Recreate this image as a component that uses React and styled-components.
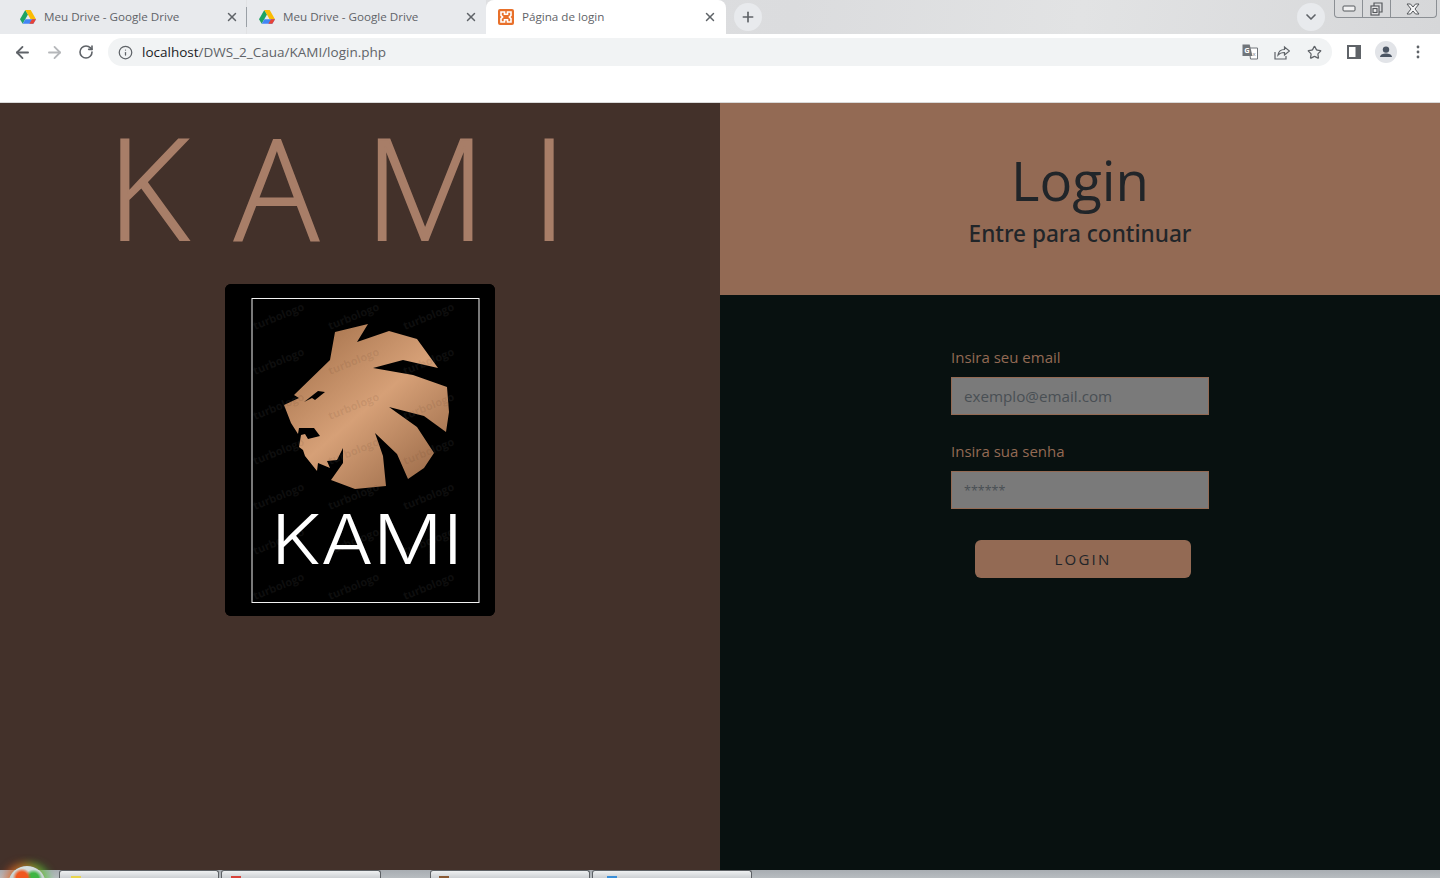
import styled, { createGlobalStyle } from "styled-components";
import { ArrowLeft, ArrowRight, RotateCw, Info, Star, Plus, X, ChevronDown } from "lucide-react";

const GlobalStyle = createGlobalStyle`
  html, body {
    margin: 0;
    padding: 0;
    height: 100%;
    overflow: hidden;
  }
  body {
    font-family: "Open Sans", "Noto Sans", sans-serif;
  }
`;

const Page = styled.div`
  width: 1440px;
  height: 878px;
  display: flex;
  flex-direction: column;
  overflow: hidden;
  position: relative;
`;

// Browser top
const TabStrip = styled.div`
  height: 34px;
  display: flex;
  align-items: stretch;
  background: linear-gradient(100deg, #e4e5e7 0%, #dbdcde 55%, #e2e3e4 75%, #d6d7d9 100%);
  position: relative;
`;

const Tab = styled.div`
  width: ${(p) => p.$width}px;
  display: flex;
  align-items: center;
  box-sizing: border-box;
  padding: 0 ${(p) => p.$right}px 1px ${(p) => p.$left}px;
  gap: 8px;
  background: ${(p) => (p.$active ? "#ffffff" : "#e8eaed")};
  border-radius: ${(p) => (p.$active ? "8px 8px 0 0" : "0")};
  font-size: 11.65px;
  color: #5f6368;
`;

const TabTitle = styled.span`
  flex: 1;
  white-space: nowrap;
`;

const Divider = styled.div`
  width: 1px;
  height: 20px;
  background: #9aa0a6;
  align-self: center;
`;

const NewTab = styled.div`
  width: 28px;
  height: 28px;
  border-radius: 50%;
  background: #e8eaed;
  color: #5f6368;
  display: flex;
  align-items: center;
  justify-content: center;
  align-self: center;
  margin-left: 8px;
`;

const TabSearch = styled(NewTab)`
  margin-left: auto;
  margin-right: 9px;
`;

const WindowButtons = styled.div`
  display: flex;
  width: 103px;
  height: 18px;
  box-sizing: border-box;
  margin-right: 3px;
  border: 1px solid #8b8f94;
  border-top: none;
  border-radius: 0 0 4px 4px;
`;

const WindowButton = styled.div`
  width: ${(p) => p.$width}px;
  display: flex;
  align-items: center;
  justify-content: center;
  border-right: ${(p) => (p.$last ? "none" : "1px solid #8b8f94")};
`;

const Toolbar = styled.div`
  height: 36px;
  background: #ffffff;
  display: flex;
  align-items: center;
  padding-left: 6px;
  box-sizing: border-box;
  color: #5f6368;
`;

const NavButton = styled.div`
  width: 32px;
  height: 28px;
  display: flex;
  align-items: center;
  justify-content: center;
  margin-left: ${(p) => p.$gap || 0}px;
  color: ${(p) => (p.$off ? "#b5b7ba" : "#5f6368")};
`;

const Omnibox = styled.div`
  width: 1224px;
  height: 28px;
  margin-left: 6px;
  border-radius: 14px;
  background: #f1f3f4;
  display: flex;
  align-items: center;
  padding: 0 2px 0 10px;
  box-sizing: border-box;
  font-size: 13.5px;
  color: #5f6368;
`;

const Url = styled.span`
  margin-left: 9px;
  flex: 1;
  b {
    font-weight: 400;
    color: #202124;
  }
`;

const OmniIcon = styled.div`
  width: 32px;
  height: 28px;
  display: flex;
  align-items: center;
  justify-content: center;
  color: #5f6368;
`;

const InfoBar = styled.div`
  height: 32px;
  background: #ffffff;
  border-bottom: 1px solid #d9d9d9;
`;

// Login page
const Split = styled.div`
  flex: 1;
  display: grid;
  grid-template-columns: 720px 720px;
  min-height: 0;
`;

const Left = styled.div`
  background: #43312a;
  display: flex;
  flex-direction: column;
  align-items: center;
`;

const BigTitle = styled.h1`
  margin: 0;
  height: 181px;
  font-family: "Open Sans", sans-serif;
  font-weight: 300;
  font-size: 140px;
  line-height: 166px;
  letter-spacing: 46px;
  color: #a87e68;
  -webkit-text-stroke: 2px #a87e68;
  white-space: nowrap;
`;

const LogoCard = styled.div`
  width: 270px;
  height: 332px;
  border-radius: 6px;
  overflow: hidden;
  background: #000;
  svg {
    display: block;
  }
`;

const Right = styled.div`
  background: #081110;
  display: flex;
  flex-direction: column;
  align-items: center;
`;

const Banner = styled.div`
  align-self: stretch;
  height: 192px;
  background: #936a54;
  color: #212529;
  display: flex;
  flex-direction: column;
  align-items: center;
  padding-top: 43px;
  box-sizing: border-box;
`;

const Heading = styled.div`
  font-size: 54.5px;
  line-height: 68px;
`;

const SubHeading = styled.div`
  font-family: "Noto Sans", sans-serif;
  font-size: 22.6px;
  line-height: 34px;
  font-weight: 500;
  margin-top: 3px;
`;

const Form = styled.form`
  width: 258px;
  margin-top: 50px;
  display: flex;
  flex-direction: column;
`;

const Label = styled.label`
  font-size: 15px;
  line-height: 24px;
  color: #936a54;
  margin-bottom: 8px;
`;

const Input = styled.input`
  width: 258px;
  height: 38px;
  box-sizing: border-box;
  border: 1px solid #936a54;
  background: #7a7a7a;
  padding: 0 12px;
  margin-bottom: 24px;
  font-family: inherit;
  font-size: ${(p) => p.$size}px;
  color: #43484d;
  outline: none;
  &::placeholder {
    color: #494f54;
    opacity: 1;
  }
`;

const LoginButton = styled.button`
  width: 216px;
  height: 38px;
  margin: 7px 0 0 24px;
  border: none;
  border-radius: 6px;
  background: #936a54;
  color: #212529;
  font-family: inherit;
  font-size: 15px;
  letter-spacing: 2.2px;
  padding: 0;
`;

// Windows taskbar peeking in at the bottom
const Taskbar = styled.div`
  position: absolute;
  left: 0;
  right: 0;
  bottom: 0;
  height: 8px;
  background: linear-gradient(#a8adb2, #b7bcc0);
  display: flex;
  padding-left: 59px;
  gap: 2px;
`;

const TaskItem = styled.div`
  width: 160px;
  height: 8px;
  box-sizing: border-box;
  margin-left: ${(p) => p.$gap || 0}px;
  padding: 5px 0 0 ${(p) => p.$iconX}px;
  border: 1px solid #5d6165;
  border-bottom: none;
  border-radius: 3px 3px 0 0;
  background: linear-gradient(#eef0f1, #ccd0d3);
  &::after {
    content: "";
    display: block;
    width: 10px;
    height: 2px;
    background: ${(p) => p.$icon};
  }
`;

const StartOrb = styled.div`
  position: absolute;
  left: 9px;
  bottom: -20px;
  width: 36px;
  height: 32px;
  border-radius: 50%;
  background:
    radial-gradient(circle at 36% 36%, #f0571d 0 18%, transparent 30%),
    radial-gradient(circle at 68% 38%, #3fb544 0 16%, transparent 28%),
    linear-gradient(#d8e2e0, #a6b4b2);
  box-shadow: -4px -2px 8px rgba(240, 90, 30, 0.7), 4px -2px 8px rgba(70, 210, 60, 0.75);
  z-index: 2;
`;

const DriveIcon = () => (
  <svg width="16" height="14" viewBox="0 0 16 14">
    <path d="M5.3 0L0 9.2l2.7 4.6L8 4.6z" fill="#1fa463" />
    <path d="M5.3 0h5.4L16 9.2h-5.4z" fill="#fbbc04" />
    <path d="M5.4 9.2H16l-2.7 4.6H2.7z" fill="#4285f4" />
    <path d="M12 9.2h4l-2.7 4.6H9.4z" fill="#ea4335" />
  </svg>
);

const XamppIcon = () => (
  <svg width="16" height="16" viewBox="0 0 16 16">
    <rect width="16" height="16" rx="2" fill="#e8702a" />
    <path d="M3 3h3.5v2.2h3V3H13v3.4l-1.6 1.6L13 9.6V13H9.5v-2.2h-3V13H3V9.6L4.6 8 3 6.4z" fill="none" stroke="#fff" strokeWidth="1.6" />
  </svg>
);

const TranslateIcon = () => (
  <svg width="16" height="16" viewBox="0 0 16 16">
    <path d="M7 4h8.5v11H8.5z" fill="#fff" stroke="#70757a" />
    <path d="M0.5 0.5h7.2l2.8 11.5H0.5z" fill="#70757a" />
    <text x="2.2" y="9" fontSize="7.5" fontWeight="700" fontFamily="Open Sans" fill="#fff">G</text>
    <text x="10.6" y="11.5" fontSize="6" fontFamily="Open Sans" fill="#70757a">x</text>
  </svg>
);

const ShareIcon = () => (
  <svg width="16" height="15" viewBox="0 0 16 15" fill="none" stroke="#5f6368" strokeWidth="1.2">
    <path d="M1 7v7h11v-3" />
    <path d="M4 10c.5-3.500 3-5.500 6.500-5.500V2l5 4-5 4V7.500C7.500 7.500 5.500 8.300 4 10z" />
  </svg>
);

const PanelIcon = () => (
  <svg width="14" height="14" viewBox="0 0 14 14">
    <path d="M0 0h14v14H0z" fill="#5f6368" />
    <path d="M2 2h6.500v10H2z" fill="#fff" />
  </svg>
);

const Avatar = () => (
  <svg width="22" height="22" viewBox="0 0 22 22">
    <circle cx="11" cy="11" r="11" fill="#e2e4e8" />
    <circle cx="11" cy="8.600" r="3.200" fill="#4b5563" />
    <path d="M5 16c0-2.600 3.400-3.600 6-3.600s6 1 6 3.600z" fill="#4b5563" />
  </svg>
);

const Dots = () => (
  <svg width="4" height="14" viewBox="0 0 4 14">
    <circle cx="2" cy="2" r="1.400" fill="#5f6368" />
    <circle cx="2" cy="7" r="1.400" fill="#5f6368" />
    <circle cx="2" cy="12" r="1.400" fill="#5f6368" />
  </svg>
);

const MinimizeIcon = () => (
  <svg width="14" height="7" viewBox="0 0 14 7">
    <rect x="1" y="1" width="12" height="5" rx="1" fill="#f1f1f2" stroke="#55585c" />
  </svg>
);

const RestoreIcon = () => (
  <svg width="13" height="14" viewBox="0 0 13 14" fill="none" stroke="#55585c" strokeWidth="1.200">
    <rect x="1" y="4" width="8" height="9" fill="#eeeeef" />
    <path d="M4 4V1h8v9H9" />
    <rect x="3" y="6.500" width="4" height="4" />
  </svg>
);

const CloseIcon = () => (
  <svg width="14" height="12" viewBox="0 0 14 12">
    <path d="M1 1h3.500L7 4l2.500-3H13L9 6l4 5H9.500L7 8l-2.500 3H1l4-5z" fill="#f4f4f5" stroke="#55585c" />
  </svg>
);

const LION = "110,48 143,40 132,58 164,47 192,55 213,84 178,76 148,84 188,91 222,103 224,128 221,148 199,132 164,123 192,143 209,169 199,184 183,195 172,170 150,149 158,172 161,202 130,205 106,196 118,179 118,164 112,176 102,177 105,184 93,179 92,187 80,172 78,166 74,163 76,151 80,150 83,155 95,152 89,144 74,144 73,150 66,139 59,121 74,114 69,111 105,76";

const marks = [];
for (let r = 0; r < 7; r++) {
  for (let c = 0; c < 3; c++) {
    marks.push([30 + c * 75, 46 + r * 45]);
  }
}

const Logo = () => (
  <svg width="270" height="332" viewBox="0 0 270 332">
    <defs>
      <linearGradient id="copper" gradientUnits="userSpaceOnUse" x1="63" y1="60" x2="193" y2="212">
        <stop offset="0" stopColor="#a5724c" />
        <stop offset="0.5" stopColor="#d6a077" />
        <stop offset="1" stopColor="#9a6a48" />
      </linearGradient>
      <clipPath id="lionClip">
        <polygon points={LION} />
      </clipPath>
    </defs>
    <rect width="270" height="332" fill="#000" />
    {marks.map(([x, y], i) => (
      <text key={i} x={x} y={y} fontSize="11" fontWeight="700" fontFamily="Open Sans" fill="#0e0e0e" transform={`rotate(-22 ${x} ${y})`}>
        turbologo
      </text>
    ))}
    <rect x="27" y="14.500" width="227" height="304" fill="none" stroke="#f2f2f2" strokeWidth="1" />
    <polygon fill="url(#copper)" points={LION} />
    <polygon fill="#000" points="79,118 93,107 100,108 90,116 87,114" />
    <g clipPath="url(#lionClip)">
      {marks.map(([x, y], i) => (
        <text key={i} x={x} y={y} fontSize="11" fontWeight="700" fontFamily="Open Sans" fill="rgba(80,50,30,0.1)" transform={`rotate(-22 ${x} ${y})`}>
          turbologo
        </text>
      ))}
    </g>
    <text x="46" y="280" fontSize="68" fontWeight="300" fontFamily="Inter, sans-serif" fill="#fff" textLength="192" lengthAdjust="spacingAndGlyphs">
      KAMI
    </text>
  </svg>
);

export default function App() {
  return (
    <Page>
      <GlobalStyle />
      <TabStrip>
        <Tab $width={246} $left={20} $right={7}>
          <DriveIcon />
          <TabTitle>Meu Drive - Google Drive</TabTitle>
          <X size={14} strokeWidth={2.5} />
        </Tab>
        <Divider />
        <Tab $width={239} $left={12} $right={8}>
          <DriveIcon />
          <TabTitle>Meu Drive - Google Drive</TabTitle>
          <X size={14} strokeWidth={2.5} />
        </Tab>
        <Tab $active $width={240} $left={12} $right={9}>
          <XamppIcon />
          <TabTitle>Página de login</TabTitle>
          <X size={14} strokeWidth={2.5} />
        </Tab>
        <NewTab>
          <Plus size={16} strokeWidth={2.5} />
        </NewTab>
        <TabSearch>
          <ChevronDown size={16} strokeWidth={2.5} />
        </TabSearch>
        <WindowButtons>
          <WindowButton $width={28}>
            <MinimizeIcon />
          </WindowButton>
          <WindowButton $width={27}>
            <RestoreIcon />
          </WindowButton>
          <WindowButton $width={46} $last>
            <CloseIcon />
          </WindowButton>
        </WindowButtons>
      </TabStrip>
      <Toolbar>
        <NavButton>
          <ArrowLeft size={19} strokeWidth={2.3} />
        </NavButton>
        <NavButton $off>
          <ArrowRight size={19} strokeWidth={2.3} />
        </NavButton>
        <NavButton>
          <RotateCw size={16} strokeWidth={2.4} />
        </NavButton>
        <Omnibox>
          <Info size={15} strokeWidth={2} />
          <Url>
            <b>localhost</b>/DWS_2_Caua/KAMI/login.php
          </Url>
          <OmniIcon>
            <TranslateIcon />
          </OmniIcon>
          <OmniIcon>
            <ShareIcon />
          </OmniIcon>
          <OmniIcon>
            <Star size={15} strokeWidth={2} />
          </OmniIcon>
        </Omnibox>
        <NavButton $gap={6}>
          <PanelIcon />
        </NavButton>
        <NavButton>
          <Avatar />
        </NavButton>
        <NavButton>
          <Dots />
        </NavButton>
      </Toolbar>
      <InfoBar />
      <Split>
        <Left>
          <BigTitle>KAMI</BigTitle>
          <LogoCard>
            <Logo />
          </LogoCard>
        </Left>
        <Right>
          <Banner>
            <Heading>Login</Heading>
            <SubHeading>Entre para continuar</SubHeading>
          </Banner>
          <Form onSubmit={(e) => e.preventDefault()}>
            <Label>Insira seu email</Label>
            <Input $size={15.2} placeholder="exemplo@email.com" />
            <Label>Insira sua senha</Label>
            <Input $size={12.5} placeholder="******" />
            <LoginButton type="button">LOGIN</LoginButton>
          </Form>
        </Right>
      </Split>
      <Taskbar>
        <TaskItem $icon="#e8d44d" $iconX={11} />
        <TaskItem $icon="#d8433a" $iconX={9} />
        <TaskItem $gap={47} $icon="#8a5a34" $iconX={8} />
        <TaskItem $icon="#3a8fd8" $iconX={14} />
      </Taskbar>
      <StartOrb />
    </Page>
  );
}
